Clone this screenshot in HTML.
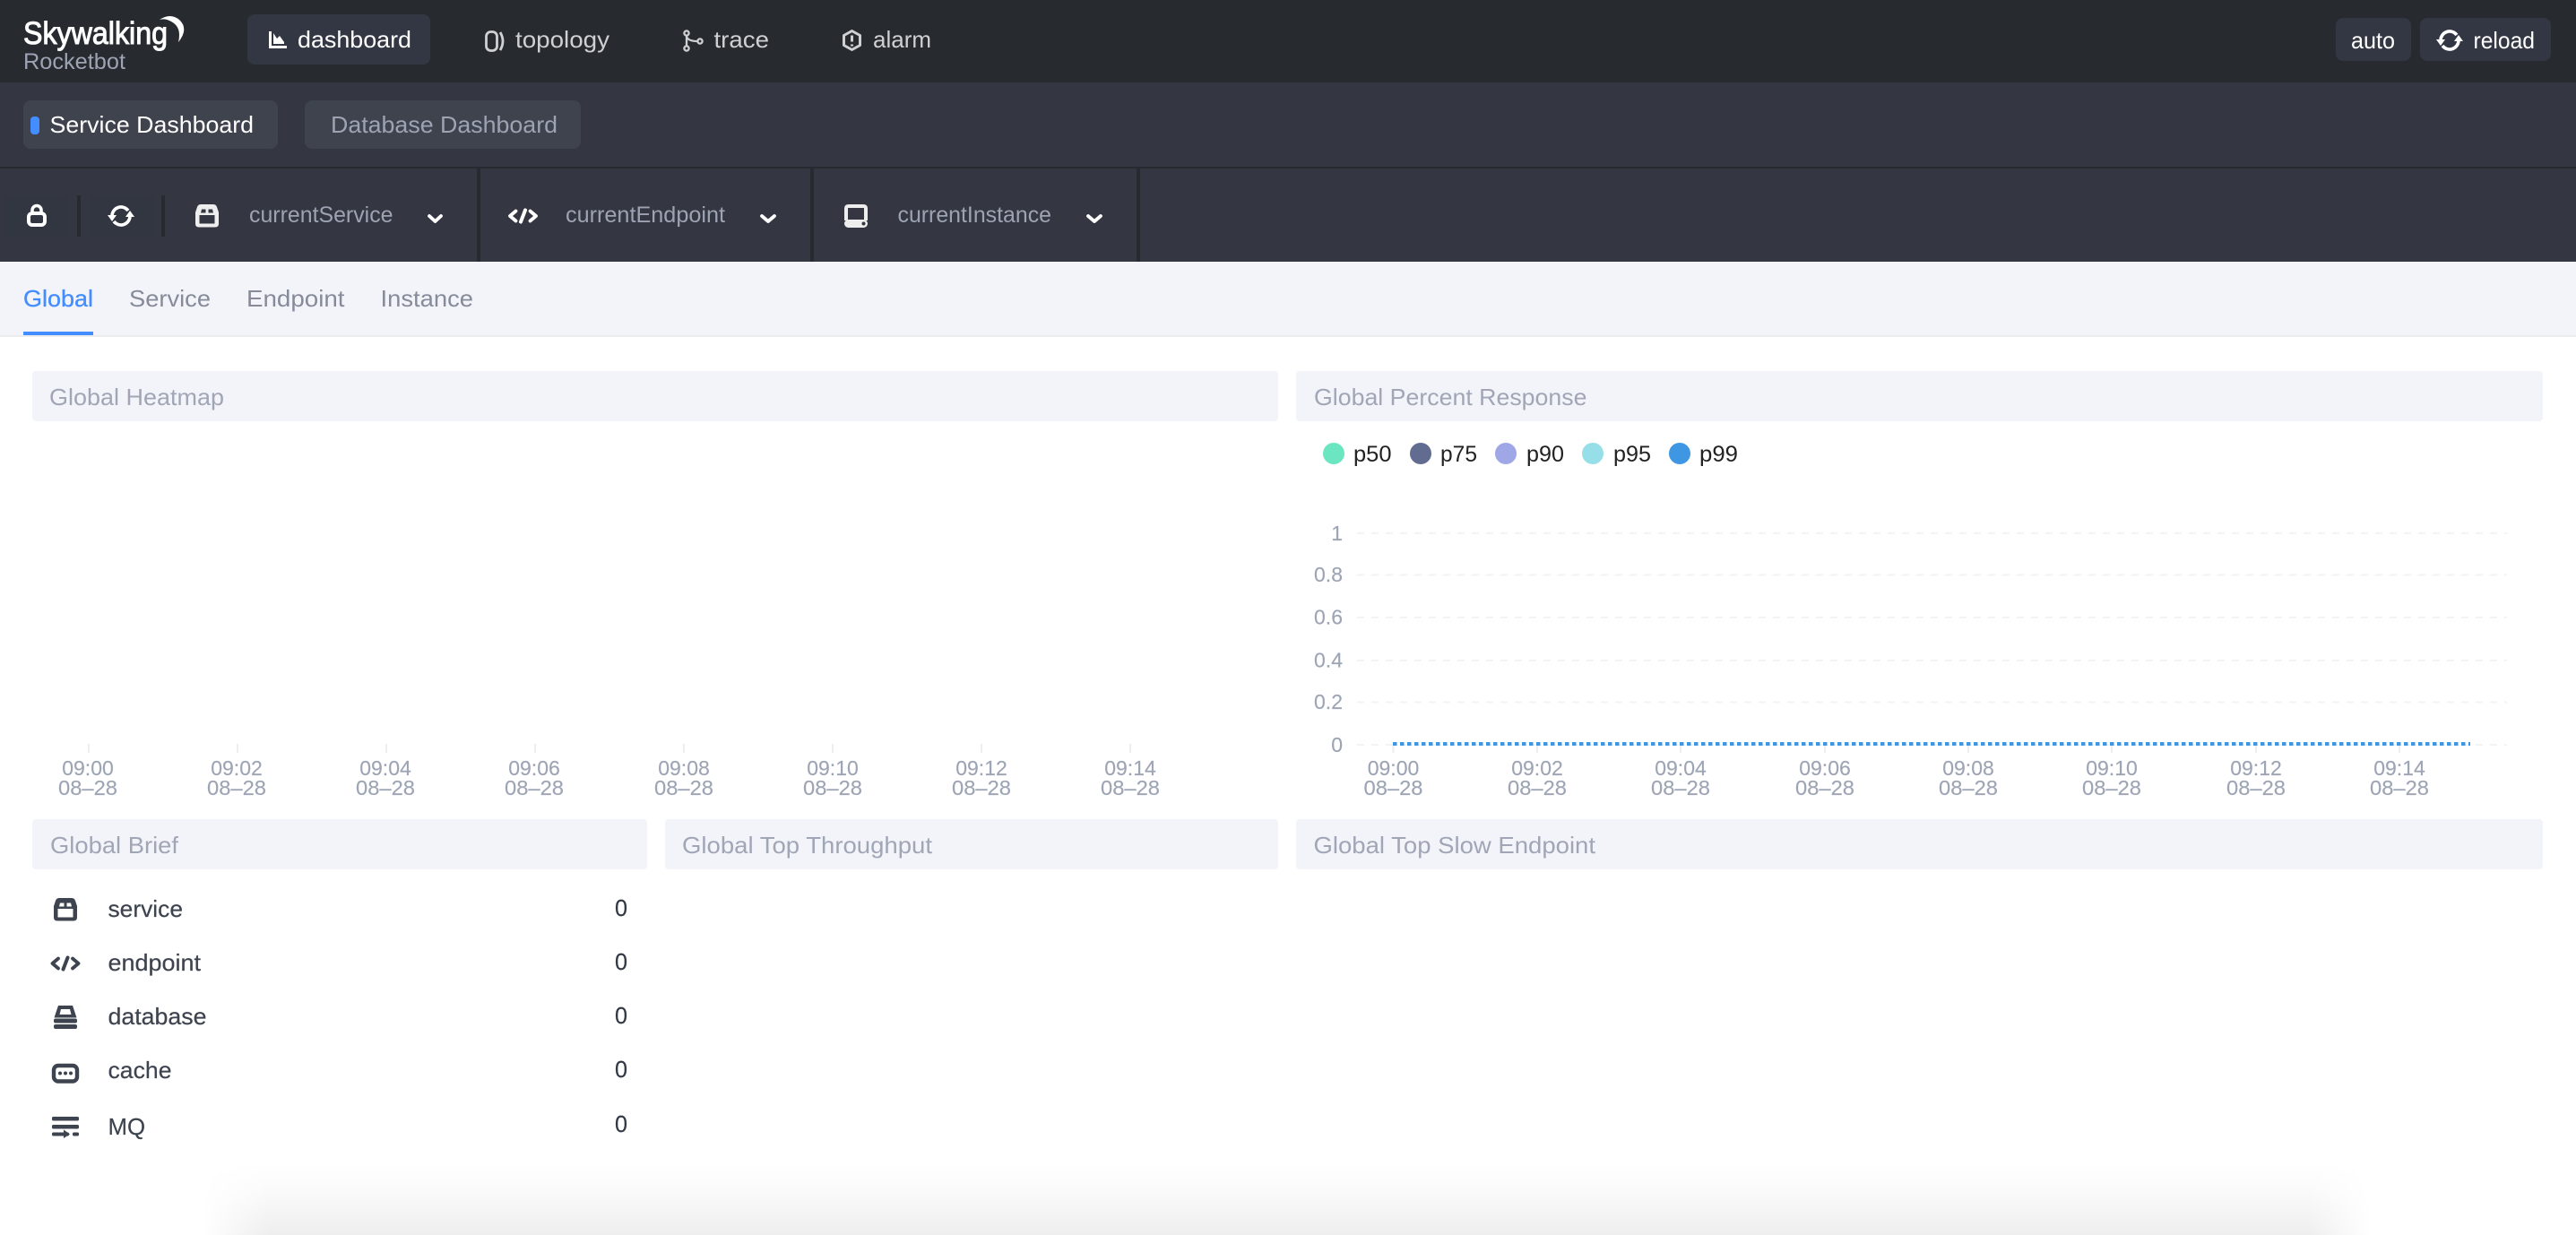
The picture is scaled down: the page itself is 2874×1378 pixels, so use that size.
<!DOCTYPE html>
<html><head><meta charset="utf-8"><title>Rocketbot</title>
<style>
html,body{margin:0;padding:0;background:#fff;width:2874px;height:1378px;overflow:hidden}
#w{position:relative;width:2874px;height:1378px;overflow:hidden}
svg{display:block;position:absolute;left:0;top:0}
#s{position:absolute;left:225px;width:2420px;top:1298px;height:80px;background:linear-gradient(to top,rgba(0,0,0,.065),rgba(0,0,0,.045) 30%,rgba(0,0,0,.018) 60%,rgba(0,0,0,0));-webkit-mask-image:linear-gradient(to right,transparent 0,#000 75px,#000 2350px,transparent 100%);mask-image:linear-gradient(to right,transparent 0,#000 75px,#000 2350px,transparent 100%)}
text{font-family:"Liberation Sans","Noto Sans CJK SC",sans-serif;font-size:26px}
.t{fill:#a0a6b6}
.g{fill:#9da3b3;font-size:25px}
.n{fill:#cfd0d2}
.b{fill:#3d444f;stroke:#3d444f;stroke-width:.2}
.v{fill:#333a45;font-size:26px;stroke:#333a45;stroke-width:.2}
.x{fill:#9da5b5;font-size:23px;text-anchor:middle;stroke:#9da5b5;stroke-width:.15}
.y{fill:#9da5b5;font-size:23px;text-anchor:end;stroke:#9da5b5;stroke-width:.15}
.l{fill:#222;font-size:25px}
.tb{fill:#868b9a}
</style></head><body><div id="w">
<svg width="2874" height="1378" viewBox="0 0 2874 1378" xmlns="http://www.w3.org/2000/svg">
<defs>
<g id="rl"><path d="M8 -6A10 10 0 0 0 -10 0M-8 6A10 10 0 0 0 10 0" fill="none" stroke="currentColor" stroke-width="3.6"/><path d="M-15 -1H-5L-10 6ZM15 1H5L10 -6Z" fill="currentColor"/></g>
<path id="st" fill="currentColor" fill-rule="evenodd" d="M6 0H20Q23 0 24 3L26 9V21.5Q26 25.5 22 25.5H4Q0 25.5 0 21.5V9L2 3Q3 0 6 0ZM4.500 12V21.500H21.500V12ZM7 5.500L6 9.500H11.500V5.500ZM14.500 5.500V9.500H20L19 5.500Z"/>
<g id="ep" fill="none" stroke="currentColor" stroke-width="3.8" stroke-linecap="round" stroke-linejoin="round"><path d="M9 2.5L2.5 8L9 13.5M25 2.5L31.5 8L25 13.5"/><path d="M14.5 14.5L19.5 1.5" stroke-width="4"/></g>
</defs>
<rect width="2874" height="92" fill="#272b30"/>
<rect y="92" width="2874" height="94" fill="#343741"/>
<rect y="186" width="2874" height="2" fill="#272b30"/>
<rect y="188" width="2874" height="104" fill="#343741"/>
<rect y="292" width="2874" height="82" fill="#f3f4f9"/>
<rect y="374" width="2874" height="2" fill="#ececee"/>

<text x="26" y="49" style="font-size:35px" fill="#fff" stroke="#fff" stroke-width="1" textLength="161" lengthAdjust="spacingAndGlyphs">Skywalking</text>
<path d="M178 22Q190 14 200 22Q211 32 199 47Q203 30 191 24Q184 20 178 22Z" fill="#fff"/>
<text x="26" y="77" style="font-size:25px" fill="#9da3b3" textLength="114" lengthAdjust="spacingAndGlyphs">Rocketbot</text>

<rect x="276" y="16" width="204" height="56" rx="8" fill="#333743"/>
<path d="M300 35V54H320V51H303V35Z" fill="#fff"/><path d="M305 49V37L309 43L312 40L317 47V49Z" fill="#fff"/>
<text x="332" y="53" fill="#fff" textLength="127" lengthAdjust="spacingAndGlyphs">dashboard</text>
<rect x="542.5" y="35.5" width="12" height="21" rx="5" fill="none" stroke="#cfd0d2" stroke-width="2.8"/><path d="M558 36Q564 46 558 56" fill="none" stroke="#cfd0d2" stroke-width="2.8"/>
<text class="n" x="575" y="53" textLength="105" lengthAdjust="spacingAndGlyphs">topology</text>
<g fill="none" stroke="#cfd0d2" stroke-width="2.3"><circle cx="766" cy="37" r="2.6"/><circle cx="766" cy="54" r="2.6"/><circle cx="781" cy="46" r="2.6"/><path d="M766 40V51M766 41Q768 46 778 46"/></g>
<text class="n" x="796.5" y="53" textLength="61.5" lengthAdjust="spacingAndGlyphs">trace</text>
<path d="M950.5 34.5L959.5 39.5V50.5L950.5 55.5L941.5 50.5V39.5Z" fill="none" stroke="#cfd0d2" stroke-width="3" stroke-linejoin="round"/><path d="M950.5 39.5V46.5M950.5 49.5V51.5" stroke="#cfd0d2" stroke-width="3"/>
<text class="n" x="974" y="53" textLength="65" lengthAdjust="spacingAndGlyphs">alarm</text>

<rect x="2606" y="20" width="84" height="48" rx="8" fill="#333743"/>
<text x="2623" y="54" fill="#fff" textLength="49" lengthAdjust="spacingAndGlyphs">auto</text>
<rect x="2700" y="20" width="146" height="48" rx="8" fill="#333743"/>
<use href="#rl" transform="translate(2733 45)" color="#fff"/>
<text x="2759.5" y="54" fill="#fff" textLength="68.5" lengthAdjust="spacingAndGlyphs">reload</text>

<rect x="26" y="112" width="284" height="54" rx="8" fill="#3f434e"/>
<rect x="34" y="130" width="10" height="20" rx="4" fill="#448dfe"/>
<text x="55.5" y="148" fill="#fff" textLength="227.5" lengthAdjust="spacingAndGlyphs">Service Dashboard</text>
<rect x="340" y="112" width="308" height="54" rx="8" fill="#3f434e"/>
<text x="369" y="148" fill="#9da3b3" textLength="253" lengthAdjust="spacingAndGlyphs">Database Dashboard</text>

<rect x="5" y="218" width="71" height="46" fill="#323640"/><rect x="100" y="218" width="71" height="46" fill="#323640"/>
<rect x="86" y="218" width="4" height="46" fill="#272b30"/>
<rect x="180" y="218" width="4" height="46" fill="#272b30"/>
<rect x="532" y="188" width="4" height="104" fill="#272b30"/>
<rect x="904" y="188" width="4" height="104" fill="#272b30"/>
<rect x="1268" y="188" width="4" height="104" fill="#272b30"/>

<rect x="32" y="238" width="18" height="13" rx="4" fill="none" stroke="#fff" stroke-width="4"/><path d="M36 238V234.5A5 5 0 0 1 46 234.5V238" fill="none" stroke="#fff" stroke-width="3.6"/>
<use href="#rl" transform="translate(135 241)" color="#fff"/>
<use href="#st" transform="translate(218 228)" color="#eee"/>
<text class="g" x="278" y="248" textLength="160.5" lengthAdjust="spacingAndGlyphs">currentService</text>
<path d="M479 241L485.5 247L492 241" fill="none" stroke="#fff" stroke-width="3.8" stroke-linecap="round" stroke-linejoin="round"/>
<use href="#ep" transform="translate(566.5 233)" color="#fff"/>
<text class="g" x="631" y="248" textLength="178" lengthAdjust="spacingAndGlyphs">currentEndpoint</text>
<path d="M850 241L857 247L864 241" fill="none" stroke="#fff" stroke-width="3.8" stroke-linecap="round" stroke-linejoin="round"/>
<path d="M944 246V232.5Q944 230 947 230H963Q966 230 966 232.5V246" fill="none" stroke="#eee" stroke-width="4"/><rect x="942" y="245" width="26" height="9" rx="4.5" fill="#eee"/><circle cx="963.5" cy="249.5" r="2" fill="#343741"/>
<text class="g" x="1001.5" y="248" textLength="171.5" lengthAdjust="spacingAndGlyphs">currentInstance</text>
<path d="M1214 241L1221 247L1228 241" fill="none" stroke="#fff" stroke-width="3.8" stroke-linecap="round" stroke-linejoin="round"/>

<text x="26" y="342" fill="#448dfe" stroke="#448dfe" stroke-width=".3" textLength="78" lengthAdjust="spacingAndGlyphs">Global</text>
<rect x="26" y="370" width="78" height="4" fill="#448dfe"/>
<text class="tb" x="144" y="342" textLength="91" lengthAdjust="spacingAndGlyphs">Service</text>
<text class="tb" x="275" y="342" textLength="109.5" lengthAdjust="spacingAndGlyphs">Endpoint</text>
<text class="tb" x="424.5" y="342" textLength="103.5" lengthAdjust="spacingAndGlyphs">Instance</text>

<rect x="36" y="414" width="1390" height="56" rx="4" fill="#f3f4f9"/>
<text class="t" x="55" y="452" textLength="195" lengthAdjust="spacingAndGlyphs">Global Heatmap</text>
<rect x="1446" y="414" width="1391" height="56" rx="4" fill="#f3f4f9"/>
<text class="t" x="1466" y="452" textLength="304.5" lengthAdjust="spacingAndGlyphs">Global Percent Response</text>
<rect x="36" y="914" width="686" height="56" rx="4" fill="#f3f4f9"/>
<text class="t" x="56" y="952" textLength="143" lengthAdjust="spacingAndGlyphs">Global Brief</text>
<rect x="742" y="914" width="684" height="56" rx="4" fill="#f3f4f9"/>
<text class="t" x="761" y="952" textLength="279" lengthAdjust="spacingAndGlyphs">Global Top Throughput</text>
<rect x="1446" y="914" width="1391" height="56" rx="4" fill="#f3f4f9"/>
<text class="t" x="1465.5" y="952" textLength="314.5" lengthAdjust="spacingAndGlyphs">Global Top Slow Endpoint</text>

<circle cx="1488" cy="506" r="12" fill="#6be6c1"/><text class="l" x="1510" y="515" textLength="42.5" lengthAdjust="spacingAndGlyphs">p50</text>
<circle cx="1585" cy="506" r="12" fill="#626c91"/><text class="l" x="1607" y="515" textLength="41" lengthAdjust="spacingAndGlyphs">p75</text>
<circle cx="1680" cy="506" r="12" fill="#a0a7e6"/><text class="l" x="1703" y="515" textLength="42" lengthAdjust="spacingAndGlyphs">p90</text>
<circle cx="1777" cy="506" r="12" fill="#96dee8"/><text class="l" x="1800" y="515" textLength="42" lengthAdjust="spacingAndGlyphs">p95</text>
<circle cx="1874" cy="506" r="12" fill="#3f96e3"/><text class="l" x="1896" y="515" textLength="43" lengthAdjust="spacingAndGlyphs">p99</text>

<g stroke="#f3f3f3" stroke-width="2" stroke-dasharray="8 8">
<path d="M1514 595H2797M1514 641.5H2797M1514 689H2797M1514 737H2797M1514 783.5H2797M1514 831H2797"/>
</g>
<text class="y" x="1498" y="603">1</text><text class="y" x="1498" y="649">0.8</text><text class="y" x="1498" y="696.5">0.6</text><text class="y" x="1498" y="744.5">0.4</text><text class="y" x="1498" y="791">0.2</text><text class="y" x="1498" y="839">0</text>

<g stroke="#eeeeee" stroke-width="2">
<path d="M1554.5 831V840M1715 831V840M1875 831V840M2036 831V840M2196 831V840M2356 831V840M2517 831V840M2677 831V840"/>
<path d="M99 830V840M265 830V840M431 830V840M597 830V840M763 830V840M929 830V840M1095 830V840M1261 830V840"/>
</g>
<path d="M1554 830H2756" stroke="#3f96e3" stroke-width="4" stroke-dasharray="4.5 3.5"/>

<g>
<text class="x" x="1554.5" y="865">09:00</text><text class="x" x="1554.5" y="887" textLength="66" lengthAdjust="spacingAndGlyphs">08–28</text>
<text class="x" x="1715" y="865">09:02</text><text class="x" x="1715" y="887" textLength="66" lengthAdjust="spacingAndGlyphs">08–28</text>
<text class="x" x="1875" y="865">09:04</text><text class="x" x="1875" y="887" textLength="66" lengthAdjust="spacingAndGlyphs">08–28</text>
<text class="x" x="2036" y="865">09:06</text><text class="x" x="2036" y="887" textLength="66" lengthAdjust="spacingAndGlyphs">08–28</text>
<text class="x" x="2196" y="865">09:08</text><text class="x" x="2196" y="887" textLength="66" lengthAdjust="spacingAndGlyphs">08–28</text>
<text class="x" x="2356" y="865">09:10</text><text class="x" x="2356" y="887" textLength="66" lengthAdjust="spacingAndGlyphs">08–28</text>
<text class="x" x="2517" y="865">09:12</text><text class="x" x="2517" y="887" textLength="66" lengthAdjust="spacingAndGlyphs">08–28</text>
<text class="x" x="2677" y="865">09:14</text><text class="x" x="2677" y="887" textLength="66" lengthAdjust="spacingAndGlyphs">08–28</text>
<text class="x" x="98" y="865">09:00</text><text class="x" x="98" y="887" textLength="66" lengthAdjust="spacingAndGlyphs">08–28</text>
<text class="x" x="264" y="865">09:02</text><text class="x" x="264" y="887" textLength="66" lengthAdjust="spacingAndGlyphs">08–28</text>
<text class="x" x="430" y="865">09:04</text><text class="x" x="430" y="887" textLength="66" lengthAdjust="spacingAndGlyphs">08–28</text>
<text class="x" x="596" y="865">09:06</text><text class="x" x="596" y="887" textLength="66" lengthAdjust="spacingAndGlyphs">08–28</text>
<text class="x" x="763" y="865">09:08</text><text class="x" x="763" y="887" textLength="66" lengthAdjust="spacingAndGlyphs">08–28</text>
<text class="x" x="929" y="865">09:10</text><text class="x" x="929" y="887" textLength="66" lengthAdjust="spacingAndGlyphs">08–28</text>
<text class="x" x="1095" y="865">09:12</text><text class="x" x="1095" y="887" textLength="66" lengthAdjust="spacingAndGlyphs">08–28</text>
<text class="x" x="1261" y="865">09:14</text><text class="x" x="1261" y="887" textLength="66" lengthAdjust="spacingAndGlyphs">08–28</text>
</g>

<use href="#st" transform="translate(60 1002)" color="#3d444f"/>
<text class="b" x="120.5" y="1023" textLength="83.5" lengthAdjust="spacingAndGlyphs">service</text>
<text class="v" x="686" y="1022" textLength="14" lengthAdjust="spacingAndGlyphs">0</text>
<use href="#ep" transform="translate(56 1067)" color="#3d444f"/>
<text class="b" x="120.5" y="1083" textLength="103.5" lengthAdjust="spacingAndGlyphs">endpoint</text>
<text class="v" x="686" y="1082" textLength="14" lengthAdjust="spacingAndGlyphs">0</text>
<path d="M65 1122H81L85.5 1135.5H60.500Z M66.5 1132H79.5L78 1126H68Z" fill="#3d444f" fill-rule="evenodd"/><rect x="60" y="1136.500" width="26" height="5" rx="2" fill="#3d444f"/><rect x="60" y="1143" width="26" height="5" rx="2" fill="#3d444f"/>
<text class="b" x="120.5" y="1143" textLength="110" lengthAdjust="spacingAndGlyphs">database</text>
<text class="v" x="686" y="1142" textLength="14" lengthAdjust="spacingAndGlyphs">0</text>
<rect x="60" y="1189" width="26" height="17.5" rx="5" fill="none" stroke="#3d444f" stroke-width="4.4"/><circle cx="67" cy="1197.5" r="2" fill="#3d444f"/><circle cx="73" cy="1197.5" r="2" fill="#3d444f"/><circle cx="79" cy="1197.5" r="2" fill="#3d444f"/>
<text class="b" x="120.5" y="1203" textLength="71" lengthAdjust="spacingAndGlyphs">cache</text>
<text class="v" x="686" y="1202" textLength="14" lengthAdjust="spacingAndGlyphs">0</text>
<rect x="58" y="1246" width="30" height="4.5" rx="1.5" fill="#3d444f"/><rect x="58" y="1255" width="30" height="4.5" rx="1.5" fill="#3d444f"/><rect x="58" y="1263.5" width="19" height="4" rx="1.5" fill="#3d444f"/><path d="M71 1260.5L78 1265.5L71 1270Z" fill="#3d444f"/><rect x="81" y="1263.5" width="7" height="4" rx="1.5" fill="#3d444f"/>
<text class="b" x="120.5" y="1266" textLength="41.5" lengthAdjust="spacingAndGlyphs">MQ</text>
<text class="v" x="686" y="1263" textLength="14" lengthAdjust="spacingAndGlyphs">0</text>
</svg>
<div id="s"></div>
</div></body></html>
